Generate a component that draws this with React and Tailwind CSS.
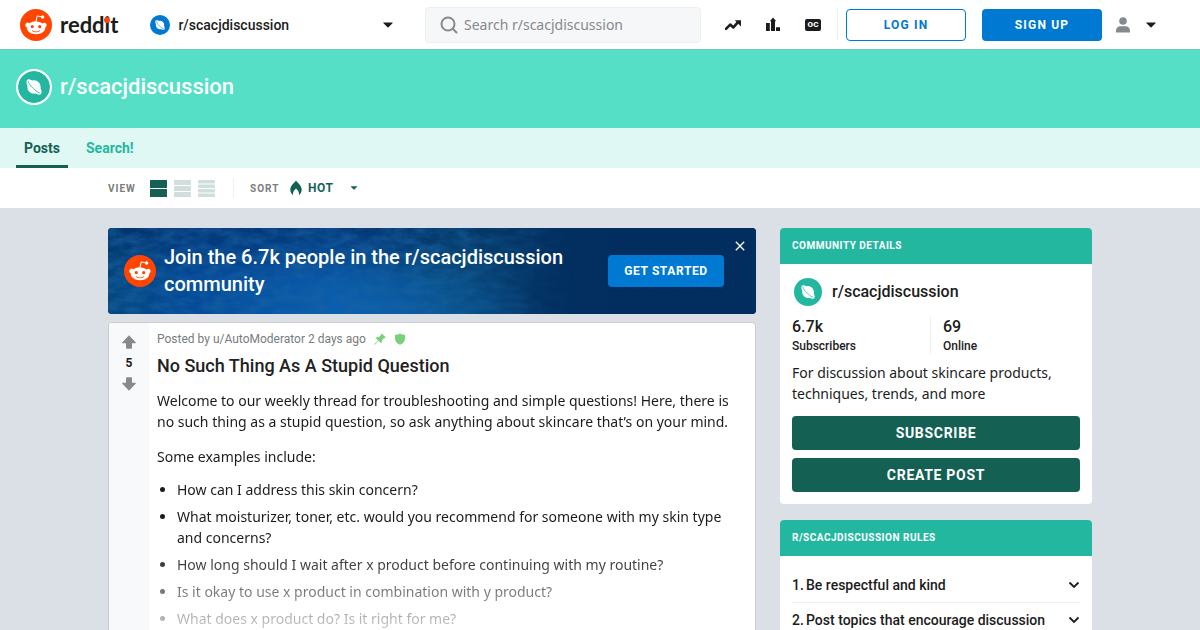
import React, { useState } from 'react';
import { MdClose } from 'react-icons/md';

const examples = [
    'How can I address this skin concern?',
    'What moisturizer, toner, etc. would you recommend for someone with my skin type and concerns?',
    'How long should I wait after x product before continuing with my routine?',
    'Is it okay to use x product in combination with y product?',
    'What does x product do? Is it right for me?',
];

const rules = ['Be respectful and kind', 'Post topics that encourage discussion'];

function Snoo({ className }) {
    return (
        <svg viewBox="0 0 20 20" className={className} aria-hidden="true">
            <circle cx="10" cy="10" r="10" fill="#FF4500" />
            <path
                fill="#fff"
                d="M16.67,10A1.46,1.46,0,0,0,14.2,9a7.12,7.12,0,0,0-3.85-1.23L11,4.65,13.14,5.1a1,1,0,1,0,.13-0.61L10.82,4a0.31,0.31,0,0,0-.37.24L9.71,7.71a7.14,7.14,0,0,0-3.9,1.23A1.46,1.46,0,1,0,4.2,11.33a2.87,2.87,0,0,0,0,.44c0,2.24,2.61,4.06,5.83,4.06s5.83-1.82,5.83-4.06a2.87,2.87,0,0,0,0-.44A1.46,1.46,0,0,0,16.67,10Zm-10,1a1,1,0,1,1,1,1A1,1,0,0,1,6.67,11Zm5.81,2.75a3.84,3.84,0,0,1-2.47.77,3.84,3.84,0,0,1-2.47-.77,0.27,0.27,0,0,1,.38-0.38A3.27,3.27,0,0,0,10,14a3.28,3.28,0,0,0,2.09-.61A0.27,0.27,0,1,1,12.48,13.79Zm-0.18-1.71a1,1,0,1,1,1-1A1,1,0,0,1,12.29,12.08Z"
            />
        </svg>
    );
}

// Planet avatar, the disc takes the current text colour
function Planet({ className }) {
    return (
        <svg viewBox="0 0 20 20" className={className} aria-hidden="true">
            <circle cx="10" cy="10" r="10" fill="currentColor" />
            <g transform="rotate(45 10 10)">
                <circle cx="10" cy="10" r="4.2" fill="#fff" />
                <ellipse cx="10" cy="10" rx="6.2" ry="2.7" fill="#fff" />
                <path d="M4.7 10C6.2 11.3 13.8 11.3 15.3 10" fill="none" stroke="currentColor" strokeWidth="0.5" />
            </g>
        </svg>
    );
}

function Caret({ className }) {
    return (
        <svg viewBox="0 0 10 6" className={className} fill="currentColor" aria-hidden="true">
            <path d="M0.6 0.4h8.8c.4 0 .5.4.3.7L5.5 5.3a.7.7 0 0 1-1 0L.3 1.1C0 .8.2.4.6.4z" />
        </svg>
    );
}

function Vote({ down }) {
    return (
        <svg viewBox="0 0 14 14" className={down ? 'h-3.5 w-3.5 rotate-180' : 'h-3.5 w-3.5'} fill="#878a8c" aria-hidden="true">
            <path d="M7 0.3l6.6 6.9c.4.5.2 1-.4 1H10V13c0 .5-.3.8-.8.8H4.8c-.5 0-.8-.3-.8-.8V8.2H.8c-.6 0-.8-.5-.4-1z" />
        </svg>
    );
}

// Stack of bars used by the three view switches
function Rows({ count }) {
    const height = (17 - (count - 1)) / count;
    return (
        <svg viewBox="0 0 17 17" className="h-[17px] w-[17px]" fill="currentColor" aria-hidden="true">
            {Array.from({ length: count }, (_, i) => (
                <rect key={i} x="0" y={i * (height + 1)} width="17" height={height} rx="0.5" />
            ))}
        </svg>
    );
}

function BannerTexture() {
    return (
        <svg className="absolute inset-0 h-full w-full" preserveAspectRatio="none" viewBox="0 0 648 86" aria-hidden="true">
            <defs>
                <linearGradient id="base" x1="0" x2="1">
                    <stop offset="0" stopColor="#04477c" />
                    <stop offset="0.12" stopColor="#034a98" />
                    <stop offset="0.35" stopColor="#0655a6" />
                    <stop offset="0.53" stopColor="#074a7a" />
                    <stop offset="0.68" stopColor="#033061" />
                    <stop offset="0.8" stopColor="#022d5f" />
                </linearGradient>
                <linearGradient id="shade" x1="0" x2="0" y1="0" y2="1">
                    <stop offset="0" stopColor="#021f50" stopOpacity="0.5" />
                    <stop offset="0.6" stopColor="#021f50" stopOpacity="0" />
                </linearGradient>
                <radialGradient id="glow">
                    <stop offset="0" stopColor="#0d65b4" stopOpacity="0.7" />
                    <stop offset="1" stopColor="#0d65b4" stopOpacity="0" />
                </radialGradient>
                <linearGradient id="fade" x1="0" x2="1">
                    <stop offset="0" stopColor="#fff" />
                    <stop offset="0.5" stopColor="#fff" />
                    <stop offset="0.72" stopColor="#000" />
                </linearGradient>
                <mask id="left">
                    <rect width="648" height="86" fill="url(#fade)" />
                </mask>
                <filter id="grain" x="0" y="0" width="100%" height="100%">
                    <feTurbulence type="fractalNoise" baseFrequency="0.06 0.12" numOctaves="5" seed="11" />
                    <feColorMatrix values="0 0 0 0 0.01  0 0 0 0 0.12  0 0 0 0 0.36  1.2 0 0 0 -0.35" />
                </filter>
            </defs>
            <rect width="648" height="86" fill="url(#base)" />
            <ellipse cx="260" cy="80" rx="170" ry="50" fill="url(#glow)" />
            <g mask="url(#left)">
                <rect width="648" height="86" fill="url(#shade)" />
                <rect width="648" height="86" filter="url(#grain)" />
            </g>
        </svg>
    );
}

function Header() {
    return (
        <header className="flex h-[50px] items-center border-b border-[#6fcabb] bg-white pl-5 pr-11">
            <a href="#home" className="flex items-center gap-2" aria-label="reddit">
                <Snoo className="h-8 w-8" />
                <span className="relative font-['Lato'] text-[22px] font-bold leading-8">
                    reddit
                    <span className="absolute right-2 top-2 h-1.5 w-1.5 rounded-full bg-[#ff4500]" />
                </span>
            </a>
            <label className="ml-8 flex min-w-0 flex-1 items-center gap-2">
                <Planet className="h-5 w-5 shrink-0 text-[#0079d3]" />
                <select aria-label="Community" className="min-w-0 flex-1 appearance-none bg-transparent text-sm font-medium">
                    <option>r/scacjdiscussion</option>
                </select>
                <Caret className="h-1.5 w-2.5 shrink-0" />
            </label>
            <label className="ml-8 flex h-9 w-[276px] items-center gap-1.5 rounded border border-[#edeff1] bg-[#f6f7f8] px-3.5">
                <svg viewBox="0 0 18 18" className="h-[18px] w-[18px] shrink-0" fill="none" stroke="#878a8c" strokeWidth="2" aria-hidden="true">
                    <circle cx="8" cy="8" r="6.5" />
                    <path d="M12.8 12.8L16.5 16.5" strokeLinecap="round" />
                </svg>
                <input
                    type="search"
                    aria-label="Search r/scacjdiscussion"
                    placeholder="Search r/scacjdiscussion"
                    className="min-w-0 flex-1 bg-transparent font-['Noto_Sans'] text-sm outline-none placeholder:text-[#878a8c]"
                />
            </label>
            <nav className="ml-6 flex items-center gap-6 border-r border-[#edeff1] py-2 pr-4">
                <a href="#popular" aria-label="Popular">
                    <svg viewBox="0 0 16 16" className="h-4 w-4" aria-hidden="true">
                        <path d="M1 11.8L5.2 7.6L8.4 10.4L13 5.2" fill="none" stroke="#1c1c1c" strokeWidth="2.6" strokeLinejoin="round" strokeLinecap="round" />
                        <path d="M9.8 3.2H16V9.4z" fill="#1c1c1c" />
                    </svg>
                </a>
                <a href="#all" aria-label="All">
                    <svg viewBox="0 0 16 16" className="h-4 w-4" fill="#1c1c1c" aria-hidden="true">
                        <path d="M1 6h3.8v8H1zM11 10.2h4V14h-4zM6 14V4.2H4.8L8 .6l3.2 3.6H10V14z" />
                    </svg>
                </a>
                <a
                    href="#original"
                    aria-label="OC"
                    className="flex h-3 w-4 items-center justify-center rounded-xs bg-[#1c1c1c] text-[8px] font-black leading-3 text-white"
                >
                    OC
                </a>
            </nav>
            <div className="ml-2 flex gap-4">
                <button className="h-8 w-[120px] rounded border border-[#0079d3] text-xs font-bold tracking-widest text-[#0079d3]">LOG IN</button>
                <button className="h-8 w-[120px] rounded bg-[#0079d3] text-xs font-bold tracking-widest text-white">SIGN UP</button>
            </div>
            <button className="ml-3 flex items-center gap-3.5" aria-label="User menu">
                <svg viewBox="0 0 18 18" className="h-[18px] w-[18px]" fill="#878a8c" aria-hidden="true">
                    <circle cx="9" cy="5" r="3.8" />
                    <path d="M2 16.5V14.8C2 11.8 4.2 10.3 6 10.3h6c1.8 0 4 1.5 4 4.5v1.7z" />
                </svg>
                <Caret className="h-1.5 w-2.5" />
            </button>
        </header>
    );
}

function Toolbar() {
    const [view, setView] = useState(2);

    return (
        <div className="bg-white">
            <div className="mx-auto flex h-10 max-w-[984px] items-center">
                <span className="w-[42px] text-[10px] font-bold tracking-widest text-[#7c7c7c]">VIEW</span>
                <div className="flex gap-[7px]">
                    {[2, 3, 4].map((count) => (
                        <button
                            key={count}
                            onClick={() => setView(count)}
                            aria-label={`View ${count}`}
                            className={view === count ? 'text-[#146154]' : 'text-[#d0dfdd]'}
                        >
                            <Rows count={count} />
                        </button>
                    ))}
                </div>
                <label className="ml-[18px] flex h-5 items-center border-l border-[#edeff1] pl-4 text-[#146154]">
                    <span className="w-10 text-[10px] font-bold tracking-widest text-[#7c7c7c]">SORT</span>
                    <svg viewBox="0 0 12 16" className="mr-1.5 h-4 w-3" fill="currentColor" aria-hidden="true">
                        <path d="M6 .4C4.6 2.8.3 5.2.3 9.600c0 2.600 1.100 4.400 2.700 5.600-.3-2.700.8-4.700 3-6.700 2.200 2 3.300 4 3 6.700 1.600-1.200 2.700-3 2.700-5.600C11.700 5.200 7.400 2.800 6 .4z" />
                    </svg>
                    <select className="w-10 appearance-none bg-transparent text-xs font-bold tracking-wider">
                        <option>HOT</option>
                    </select>
                    <Caret className="ml-0.5 h-1 w-2" />
                </label>
            </div>
        </div>
    );
}

function JoinBanner() {
    return (
        <section className="relative flex items-center gap-2 overflow-hidden rounded bg-[#022d5f] py-4 pl-4 pr-8">
            <BannerTexture />
            <Snoo className="relative h-8 w-8 shrink-0" />
            <h2 className="relative flex-1 text-xl font-medium leading-[27px] text-white">
                Join the 6.7k people in the r/scacjdiscussion community
            </h2>
            <button className="relative h-8 w-[116px] shrink-0 rounded bg-[#0079d3] text-xs font-bold tracking-wider text-white">
                GET STARTED
            </button>
            <button className="absolute right-2 top-2.5 text-white" aria-label="Close">
                <MdClose className="h-4 w-4" />
            </button>
        </section>
    );
}

function Post() {
    return (
        <article className="flex overflow-hidden rounded border border-[#ccc] bg-white">
            <div className="flex w-10 shrink-0 flex-col items-center bg-[#f8f9fa] pt-3">
                <button aria-label="Upvote">
                    <Vote />
                </button>
                <span className="py-1 text-xs font-bold leading-5">5</span>
                <button aria-label="Downvote">
                    <Vote down />
                </button>
            </div>
            <div className="min-w-0 flex-1 px-2 pt-2">
                <div className="flex h-4 items-center text-xs text-[#787c7e]">
                    <span>Posted by u/AutoModerator 2 days ago</span>
                    <svg viewBox="0 0 12 12" className="ml-2 h-3 w-3" fill="#78d178" aria-hidden="true">
                        <path d="M7.7.4l3.9 3.9-.8.9-.8-.2-2.2 2.2c.3 1.2 0 2.2-.8 3L4.6 7.8 1 11.6.3 11.7.4 11 4.2 7.4 1.8 5c.8-.8 1.8-1.1 3-.8L7 2 6.8 1.2z" />
                    </svg>
                    <svg viewBox="0 0 12 12" className="ml-2 h-3 w-3" fill="#78d178" aria-hidden="true">
                        <path d="M6 .4c1.5 1 3 1.3 5 1.3v3.7c0 3-2 5.1-5 6.3-3-1.2-5-3.3-5-6.3V1.7C3 1.7 4.5 1.4 6 .4z" />
                    </svg>
                </div>
                <h1 className="pt-2 text-lg font-medium leading-[22px] text-[#222]">No Such Thing As A Stupid Question</h1>
                <div className="mt-[13px] h-[264px] overflow-hidden pr-4 font-['Noto_Sans'] text-sm leading-[21px] [mask-image:linear-gradient(180deg,#000_60%,transparent)]">
                    <p>
                        Welcome to our weekly thread for troubleshooting and simple questions! Here, there is no such thing as a
                        stupid question, so ask anything about skincare that’s on your mind.
                    </p>
                    <p className="mt-3.5">Some examples include:</p>
                    <ul className="mt-3 list-disc space-y-1.5 pl-5">
                        {examples.map((text) => (
                            <li key={text}>{text}</li>
                        ))}
                    </ul>
                </div>
            </div>
        </article>
    );
}

function Card({ title, children }) {
    return (
        <section className="overflow-hidden rounded bg-white">
            <h2 className="bg-[#24b7a0] px-3 text-[10px] font-bold leading-9 tracking-wider text-white">{title}</h2>
            <div className="p-3">{children}</div>
        </section>
    );
}

function Sidebar() {
    return (
        <aside className="w-[312px] shrink-0 space-y-4">
            <Card title="COMMUNITY DETAILS">
                <div className="flex h-8 items-center gap-2.5 px-0.5">
                    <Planet className="h-7 w-7 text-[#24b7a0]" />
                    <a href="#community" className="text-base font-medium">r/scacjdiscussion</a>
                </div>
                <div className="mt-2 flex font-medium">
                    <div className="flex-1 border-r border-[#edeff1]">
                        <p className="text-base leading-[22px]">6.7k</p>
                        <p className="text-xs leading-4">Subscribers</p>
                    </div>
                    <div className="w-[149px] pl-3">
                        <p className="text-base leading-[22px]">69</p>
                        <p className="text-xs leading-4">Online</p>
                    </div>
                </div>
                <p className="mt-2 font-['Noto_Sans'] text-sm leading-[21px]">
                    For discussion about skincare products, techniques, trends, and more
                </p>
                <div className="mt-3 flex flex-col gap-2">
                    <button className="h-[34px] rounded bg-[#146154] text-sm font-bold tracking-wider text-white">SUBSCRIBE</button>
                    <button className="h-[34px] rounded bg-[#146154] text-sm font-bold tracking-wider text-white">CREATE POST</button>
                </div>
            </Card>
            <Card title="R/SCACJDISCUSSION RULES">
                {rules.map((rule, i) => (
                    <button
                        key={rule}
                        className="flex w-full items-center border-b border-[#edeff1] py-2 text-left text-sm font-medium leading-[18px]"
                    >
                        <span className="w-3.5">{i + 1}.</span>
                        <span className="flex-1">{rule}</span>
                        <svg viewBox="0 0 12 8" className="h-2 w-3" fill="none" stroke="#1c1c1c" strokeWidth="1.8" aria-hidden="true">
                            <path d="M1.5 1.5L6 6L10.5 1.5" />
                        </svg>
                    </button>
                ))}
            </Card>
        </aside>
    );
}

export default function App() {
    return (
        <div className="min-h-screen bg-[#dae0e6] font-['Roboto',sans-serif] text-[#1c1c1c]">
            <Header />

            {/* Community banner */}
            <div className="flex h-[78px] items-center gap-2 bg-[#55dfc6] px-4 pb-1">
                <Planet className="h-9 w-9 rounded-full border-2 border-white bg-white text-[#24b7a0]" />
                <span className="text-[22px] font-medium leading-7 text-white">r/scacjdiscussion</span>
            </div>
            <nav className="flex h-10 gap-2.5 bg-[#dff8f3] px-4 text-sm font-bold leading-10">
                <a href="#posts" className="border-b-3 border-[#146154] px-2 text-[#146154]">Posts</a>
                <a href="#search" className="px-2 text-[#24b7a0]">Search!</a>
            </nav>
            <Toolbar />

            <main className="mx-auto flex max-w-[984px] gap-6 pt-5">
                <div className="min-w-0 flex-1 space-y-2">
                    <JoinBanner />
                    <Post />
                </div>
                <Sidebar />
            </main>
        </div>
    );
}
